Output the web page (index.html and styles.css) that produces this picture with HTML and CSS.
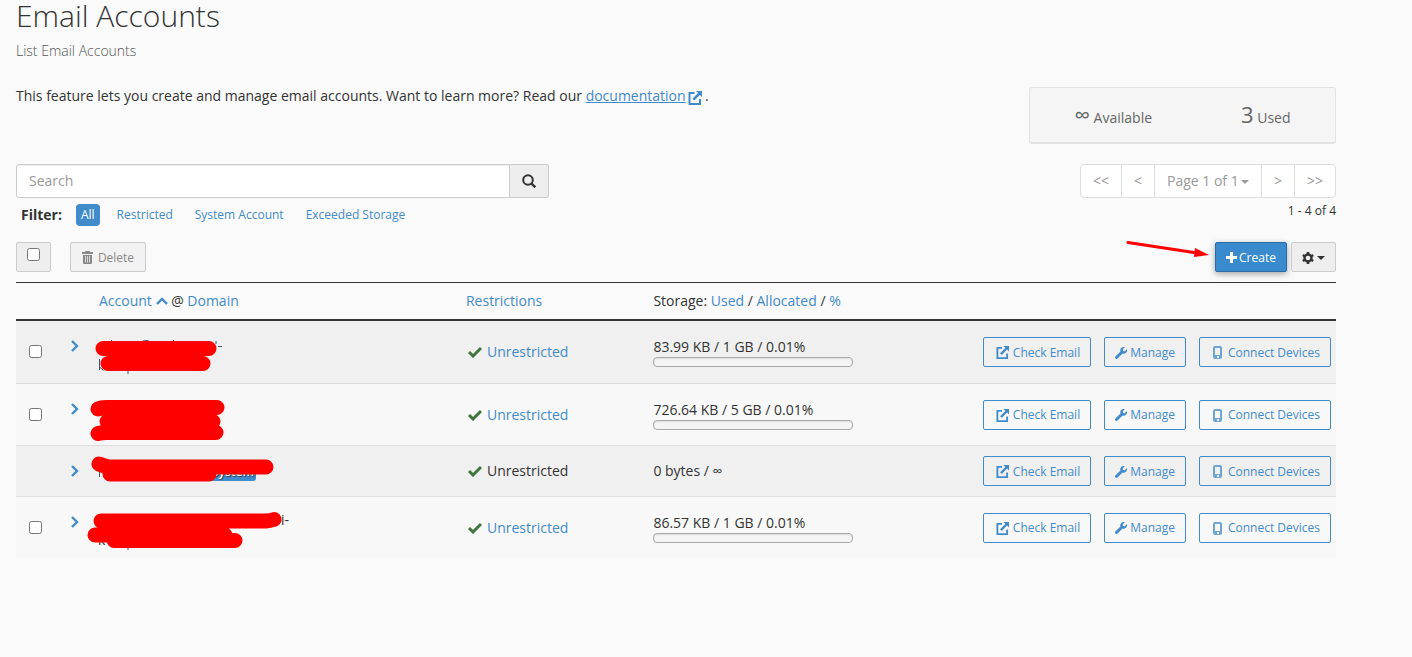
FILE: index.html
```html
<!DOCTYPE html>
<html lang="en">
<head>
<meta charset="utf-8">
<meta name="viewport" content="width=device-width, initial-scale=1">
<title>Email Accounts</title>
<link rel="stylesheet" href="styles.css">
</head>
<body>
<svg class="symbols" aria-hidden="true">
  <symbol id="external" viewBox="0 0 14 14"><path d="M6.500 2H1.500v11h10.500V8" fill="none" stroke="currentColor" stroke-width="2"/><path d="M8 0h6v6l-2.100-2.100-5.700 5.700-1.800-1.800 5.700-5.700z" fill="currentColor"/></symbol>
  <symbol id="wrench" viewBox="0 0 512 512"><path fill="currentColor" d="M507.700 109.100c-2.200-9-13.500-12.100-20.100-5.500l-74.400 74.400-67.900-11.300-11.300-67.900 74.400-74.400c6.600-6.600 3.400-17.900-5.700-20.200-47.400-11.700-99.600.9-136.600 37.900-39.600 39.600-50.500 97.100-34.100 147.200L18.700 402.800c-25 25-25 65.500 0 90.500s65.500 25 90.500 0l213.200-213.200c50.100 16.700 107.500 5.700 147.400-34.200 37.100-37.100 49.700-89.300 37.900-136.800z"/></symbol>
  <symbol id="phone" viewBox="0 0 9 13"><path fill="currentColor" opacity=".75" fill-rule="evenodd" d="M2 0h5a2 2 0 0 1 2 2v9a2 2 0 0 1-2 2H2a2 2 0 0 1-2-2V2a2 2 0 0 1 2-2zm0 2v7h5V2z"/><rect x="4" y="10" width="2" height="2" fill="#e6eef6"/></symbol>
  <symbol id="check" viewBox="0 0 14 12"><path d="M1 6l4 4 8-8" fill="none" stroke="currentColor" stroke-width="3"/></symbol>
  <symbol id="chevron" viewBox="0 0 8 12"><path d="M1 1l5 5-5 5" fill="none" stroke="currentColor" stroke-width="2.400"/></symbol>
</svg>
<main class="page">
  <h1 class="title">Email Accounts</h1>
  <p class="subtitle">List Email Accounts</p>

  <div class="intro">
    <p class="intro-text">This feature lets you create and manage email accounts. Want to learn more? Read our <a class="doc-link" href="#docs">documentation</a> <svg class="doc-icon" width="14" height="14"><use href="#external"/></svg> .</p>
    <div class="stats">
      <div><span class="stat-value">∞</span> Available</div>
      <div><span class="stat-value">3</span> Used</div>
    </div>
  </div>

  <div class="controls">
    <div class="finder">
      <form class="search" role="search">
        <input class="search-input" type="text" placeholder="Search" aria-label="Search">
        <button class="search-button" type="button" aria-label="Search"><svg width="14" height="14" viewBox="0 0 14 14"><circle cx="6" cy="6" r="4.800" fill="none" stroke="currentColor" stroke-width="2"/><path d="M9.300 9.300l4 4" stroke="currentColor" stroke-width="2.400"/></svg></button>
      </form>
      <div class="filters">
        <strong class="filter-label">Filter:</strong>
        <a class="filter active" href="#all">All</a>
        <a class="filter" href="#restricted">Restricted</a>
        <a class="filter" href="#system">System Account</a>
        <a class="filter" href="#exceeded">Exceeded Storage</a>
      </div>
    </div>
    <div class="paging">
      <nav class="pager" aria-label="Pages">
        <button type="button">&lt;&lt;</button>
        <button type="button">&lt;</button>
        <span class="page-picker"><select aria-label="Page"><option>Page 1 of 1</option></select><svg class="page-caret" width="8" height="4" viewBox="0 0 8 4"><path d="M0 0h8L4 4z" fill="currentColor"/></svg></span>
        <button type="button">&gt;</button>
        <button type="button">&gt;&gt;</button>
      </nav>
      <p class="range">1 - 4 of 4</p>
    </div>
  </div>

  <div class="toolbar">
    <label class="button select-all"><input type="checkbox" aria-label="Select all"></label>
    <button class="button delete" type="button" disabled><svg width="11" height="13" viewBox="0 0 11 13"><path fill="currentColor" fill-rule="evenodd" d="M3.500 0h4l.5 1h3v2H0V1h3zM1 4h9v8a1 1 0 0 1-1 1H2a1 1 0 0 1-1-1z"/><path d="M3.500 5v6.500M5.500 5v6.500M7.500 5v6.500" stroke="#ddd"/></svg>Delete</button>
    <div class="toolbar-end">
      <svg class="pointer" width="84" height="20" viewBox="0 0 84 20"><path d="M2 2.500L68 12.500" stroke="#f00" stroke-width="3" stroke-linecap="round"/><path d="M69 8l14 7-15 2z" fill="#f00"/></svg>
      <button class="button create" type="button"><svg width="11" height="11" viewBox="0 0 11 11"><path d="M5.500 0v11M0 5.500h11" stroke="currentColor" stroke-width="3"/></svg>Create</button>
      <button class="button settings" type="button" aria-label="Settings"><svg width="12" height="12" viewBox="0 0 12 12"><circle cx="6" cy="6" r="3.500" fill="none" stroke="currentColor" stroke-width="2.400"/><path d="M6 0v2M6 10v2M.8 3l1.700 1M9.500 8l1.700 1M.8 9l1.700-1M9.500 4l1.700-1" stroke="currentColor" stroke-width="2.600"/></svg><svg width="8" height="4" viewBox="0 0 8 4"><path d="M0 0h8L4 4z" fill="currentColor"/></svg></button>
    </div>
  </div>

  <table class="accounts">
    <colgroup><col class="col-check"><col class="col-expand"><col class="col-account"><col class="col-restrictions"><col class="col-storage"><col></colgroup>
    <thead>
      <tr>
        <td></td><td></td>
        <th><a href="#account">Account</a> <svg class="sort" width="12" height="8" viewBox="0 0 12 8"><path d="M1 7l5-5 5 5" fill="none" stroke="currentColor" stroke-width="2.400"/></svg> @ <a href="#domain">Domain</a></th>
        <th><a href="#restrictions">Restrictions</a></th>
        <th>Storage: <a href="#used">Used</a> / <a href="#allocated">Allocated</a> / <a href="#percent">%</a></th>
        <td></td>
      </tr>
    </thead>
    <tbody>
      <tr class="tall first">
        <td class="check-cell"><input type="checkbox" aria-label="Select account 1"></td>
        <td class="expand-cell"><button class="expand" type="button" aria-label="Expand account 1"><svg width="8" height="12"><use href="#chevron"/></svg></button></td>
        <td class="account-cell"><svg class="mask" width="240" height="62" viewBox="0 0 240 62"><path d="M20.500 19v4M36.500 20v3M41 20v3M52 20q3-1 6 0M82.500 19v4M125 20v3M127 25.500h4M8.500 38v11M8.500 46l4 3.500M37 42v11" stroke="#456" fill="none"/><path class="ink" d="M12 27.500H118M17 42.500H112"/></svg></td>
        <td><svg class="tick" width="14" height="12"><use href="#check"/></svg><a href="#r1">Unrestricted</a></td>
        <td>83.99 KB / 1 GB / 0.01%<div class="meter"></div></td>
        <td><div class="actions"><button class="action" type="button"><svg width="13" height="13"><use href="#external"/></svg>Check Email</button><button class="action manage" type="button"><svg width="12" height="12"><use href="#wrench"/></svg>Manage</button><button class="action connect" type="button"><svg width="9" height="13"><use href="#phone"/></svg>Connect Devices</button></div></td>
      </tr>
      <tr class="tall">
        <td class="check-cell"><input type="checkbox" aria-label="Select account 2"></td>
        <td class="expand-cell"><button class="expand" type="button" aria-label="Expand account 2"><svg width="8" height="12"><use href="#chevron"/></svg></button></td>
        <td class="account-cell"><svg class="mask" width="240" height="62" viewBox="0 0 240 62"><path class="ink" d="M7 25Q10 23.500 15 23.500H126M16 37.500H122M7 49.500Q11 48.500 15 48.500H125"/></svg></td>
        <td><svg class="tick" width="14" height="12"><use href="#check"/></svg><a href="#r2">Unrestricted</a></td>
        <td>726.64 KB / 5 GB / 0.01%<div class="meter"></div></td>
        <td><div class="actions"><button class="action" type="button"><svg width="13" height="13"><use href="#external"/></svg>Check Email</button><button class="action manage" type="button"><svg width="12" height="12"><use href="#wrench"/></svg>Manage</button><button class="action connect" type="button"><svg width="9" height="13"><use href="#phone"/></svg>Connect Devices</button></div></td>
      </tr>
      <tr>
        <td></td>
        <td class="expand-cell"><button class="expand" type="button" aria-label="Expand account 3"><svg width="8" height="12"><use href="#chevron"/></svg></button></td>
        <td class="account-cell"><span class="badge">System</span><svg class="mask" width="240" height="50" viewBox="0 0 240 50"><path d="M8.500 26v5" stroke="#456"/><path class="ink" d="M8 18Q13 20 18 21H175M19 28H118"/></svg></td>
        <td><svg class="tick" width="14" height="12"><use href="#check"/></svg>Unrestricted</td>
        <td>0 bytes / ∞</td>
        <td><div class="actions"><button class="action" type="button"><svg width="13" height="13"><use href="#external"/></svg>Check Email</button><button class="action manage" type="button"><svg width="12" height="12"><use href="#wrench"/></svg>Manage</button><button class="action connect" type="button"><svg width="9" height="13"><use href="#phone"/></svg>Connect Devices</button></div></td>
      </tr>
      <tr class="tall">
        <td class="check-cell"><input type="checkbox" aria-label="Select account 4"></td>
        <td class="expand-cell"><button class="expand" type="button" aria-label="Expand account 4"><svg width="8" height="12"><use href="#chevron"/></svg></button></td>
        <td class="account-cell split-cell"><span class="domain-end">i-</span><span class="domain-wrap">k</span><svg class="mask" width="240" height="62" viewBox="0 0 240 62"><path d="M37 47v6" stroke="#456"/><path class="ink" d="M10 24H175Q180 23.500 183 22.500M4 38H134M23 43.500H144"/></svg></td>
        <td><svg class="tick" width="14" height="12"><use href="#check"/></svg><a href="#r4">Unrestricted</a></td>
        <td>86.57 KB / 1 GB / 0.01%<div class="meter"></div></td>
        <td><div class="actions"><button class="action" type="button"><svg width="13" height="13"><use href="#external"/></svg>Check Email</button><button class="action manage" type="button"><svg width="12" height="12"><use href="#wrench"/></svg>Manage</button><button class="action connect" type="button"><svg width="9" height="13"><use href="#phone"/></svg>Connect Devices</button></div></td>
      </tr>
    </tbody>
  </table>
</main>
</body>
</html>
```
FILE: styles.css
```css
* { box-sizing: border-box; }

body {
  margin: 0;
  background: #fafafa;
  color: #333;
  font: 14px/20px "Open Sans", "Noto Sans", sans-serif;
}

button, input, select { font: inherit; color: inherit; }
input[type="checkbox"] { width: 13px; height: 13px; margin: 0; }
a { color: #428bca; text-decoration: none; }
p { margin: 0; }
svg { flex: none; }
.symbols { display: none; }

.page { padding: 0 76px 40px 16px; }

.title {
  margin: 0;
  font-size: 30px;
  font-weight: 300;
  line-height: 32px;
}

.subtitle {
  margin-top: 9px;
  color: #555;
  font-weight: 300;
}

.intro {
  display: flex;
  justify-content: space-between;
  align-items: flex-start;
  margin-top: 26px;
}

.intro-text { line-height: 18px; }
.doc-link { text-decoration: underline; }
.doc-icon { color: #428bca; vertical-align: -4px; margin: 0 -1px; }

.stats {
  display: flex;
  justify-content: space-around;
  align-items: center;
  width: 307px;
  height: 57px;
  padding-top: 1px;
  background: #f5f5f5;
  border: 1px solid #e3e3e3;
  border-bottom-width: 2px;
  border-radius: 3px;
  color: #666;
}

.stat-value { font-size: 22px; }

.controls {
  display: flex;
  justify-content: space-between;
  align-items: flex-start;
  margin-top: 20px;
}

.finder { width: 533px; }
.search { display: flex; height: 34px; }

.search-input {
  flex: 1;
  min-width: 0;
  padding: 0 12px;
  background: #fff;
  border: 1px solid #ccc;
  border-radius: 3px 0 0 3px;
  box-shadow: inset 0 1px 1px rgba(0, 0, 0, .075);
}

.search-input::placeholder { color: #999; }

.search-button {
  display: flex;
  align-items: center;
  justify-content: center;
  width: 39px;
  padding: 0;
  background: #eee;
  border: 1px solid #ccc;
  border-left: 0;
  border-radius: 0 3px 3px 0;
}

.filters {
  display: flex;
  align-items: center;
  gap: 12px;
  margin-top: 6px;
  padding-left: 5px;
}

.filter-label { margin-right: 2px; }

.filter {
  padding: 1px 5px;
  border-radius: 4px;
  font-size: 12px;
}

.filter.active { background: #428bca; color: #fff; }

.pager {
  display: flex;
  height: 34px;
  background: #fff;
  border: 1px solid #ddd;
  border-radius: 4px;
  color: #999;
}

.pager button {
  padding: 0 12px;
  background: none;
  border: 0;
}

.pager > * + * { border-left: 1px solid #ddd !important; }
.page-picker { display: flex; position: relative; }

.page-picker select {
  appearance: none;
  padding: 0 22px 0 12px;
  background: none;
  border: 0;
}

.page-caret {
  position: absolute;
  top: 15px;
  right: 12px;
  pointer-events: none;
}

.range {
  margin-top: 3px;
  font-size: 12px;
  text-align: right;
}

.toolbar { display: flex; margin-top: 16px; }

.button {
  display: inline-flex;
  align-items: center;
  justify-content: center;
  gap: 4px;
  height: 30px;
  padding: 1px 10px 0;
  background: #eee;
  border: 1px solid #ccc;
  border-radius: 2px;
  font-size: 12px;
}

.select-all { width: 35px; padding-bottom: 6px; }
.delete { width: 76px; margin-left: 19px; color: #888; background: #f2f2f2; gap: 5px; }

.toolbar-end {
  position: relative;
  display: flex;
  gap: 4px;
  margin-left: auto;
}

.pointer { position: absolute; right: 126px; top: -2px; }

.create {
  gap: 2px;
  width: 72px;
  background: #3a8ace;
  border-color: #2a6ca8;
  color: #fff;
  box-shadow: 0 2px 6px rgba(0, 0, 0, .35);
}

.settings { width: 45px; gap: 3px; }

.accounts {
  width: 100%;
  margin-top: 10px;
  border-collapse: separate;
  border-spacing: 0;
  table-layout: fixed;
}

.col-check { width: 48px; }
.col-expand { width: 27px; }
.col-account { width: 27.8%; }
.col-restrictions { width: 14.2%; }
.col-storage { width: 20%; }

.accounts th, .accounts td { padding: 0 8px; text-align: left; font-weight: 400; }

.accounts thead th, .accounts thead td {
  height: 39px;
  border-top: 1px solid #333;
  border-bottom: 2px solid #333;
}

.sort { color: #428bca; vertical-align: 1px; }

.accounts tbody td {
  height: 51px;
  border-bottom: 1px solid #ddd;
}

.accounts tbody .tall td { height: 62px; }
.accounts tbody .first td { height: 63px; }
.accounts tbody tr:nth-child(odd) { background: #f0f0f0; }
.accounts tbody tr:nth-child(even) { background: #f8f8f8; }
.accounts tbody tr:last-child td { border-bottom-color: transparent; }
.accounts tbody .check-cell { padding: 0 0 1px 13px; }
.check-cell input { display: block; }
.accounts .expand-cell { padding: 0 0 0 7px; }
.accounts .tall .expand-cell { padding-bottom: 12px; }

.expand {
  display: block;
  padding: 0;
  background: none;
  border: 0;
  color: #428bca;
}

.expand svg { display: block; }

.account-cell { position: relative; }
.mask { position: absolute; top: 0; left: 0; overflow: visible; }
.ink { fill: none; stroke: #f00; stroke-width: 15; stroke-linecap: round; }
.domain-end, .domain-wrap { display: block; }
.domain-end { padding-left: 183px; }
.accounts .split-cell { padding: 8px 8px 4px 7px; }

.badge {
  display: block;
  width: 48px;
  margin: 2px 0 0 109px;
  padding: 0 4px;
  background: #428bca;
  border-radius: 3px;
  color: #fff;
  font-size: 12px;
  font-weight: 600;
  line-height: 18px;
  text-shadow: 1px 1px 1px #245;
}

.tick { margin: 0 5px 0 2px; color: #3c763d; vertical-align: -1px; }

.meter {
  width: 200px;
  height: 10px;
  background: #f5f5f5;
  border: 1px solid #aaa;
  border-radius: 4px;
  box-shadow: inset 0 1px 2px rgba(0, 0, 0, .1);
}

.actions { display: flex; justify-content: flex-end; gap: 13px; margin-right: -3px; }

.action {
  display: inline-flex;
  align-items: center;
  gap: 4px;
  height: 30px;
  padding: 1px 10px 0 12px;
  background: none;
  border: 1px solid #428bca;
  border-radius: 2px;
  color: #428bca;
  font-size: 12px;
  white-space: nowrap;
}

.manage { gap: 3px; padding-left: 10px; }
.connect { gap: 6px; padding-left: 13px; }
```
